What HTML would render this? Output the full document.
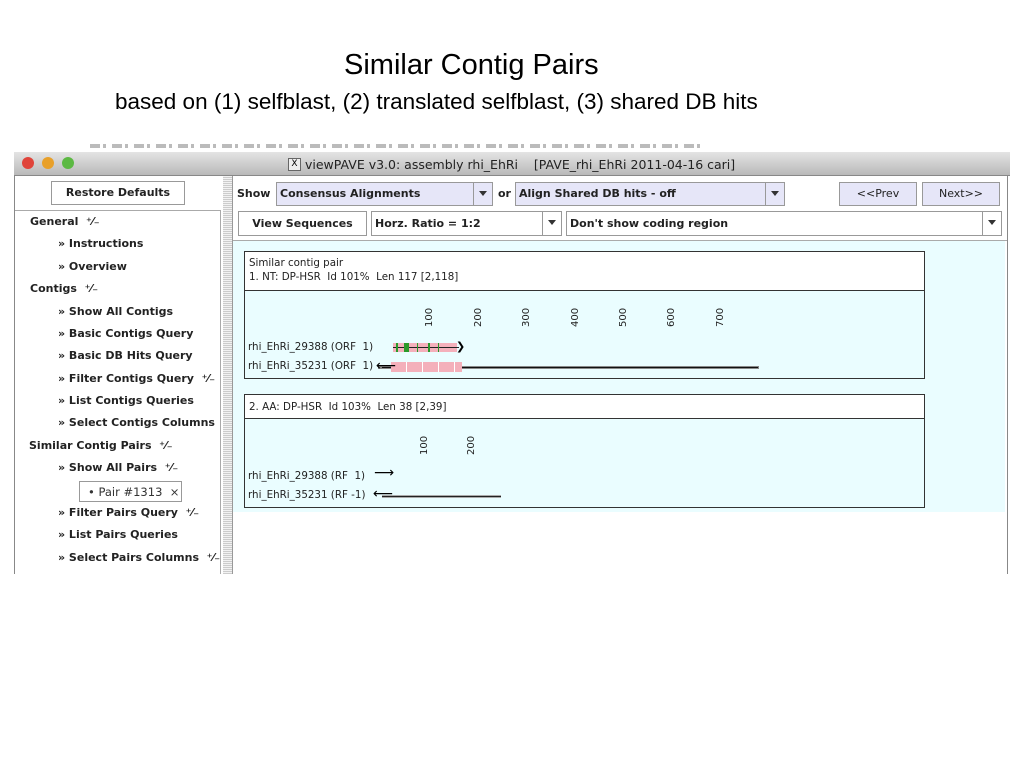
<!DOCTYPE html>
<html><head><style>
body{margin:0;width:1024px;height:768px;background:#fff;position:relative;overflow:hidden;font-family:"DejaVu Sans","Liberation Sans",sans-serif;}
.a{position:absolute;white-space:nowrap}
.h1{font-family:"Liberation Sans",sans-serif;font-size:29px;color:#000}
.h2{font-family:"Liberation Sans",sans-serif;font-size:22.5px;color:#000}
.nav{font-size:11px;font-weight:bold;color:#222}
.btn{position:absolute;border:1px solid #999;background:#fff;font-size:11px;font-weight:bold;color:#222;text-align:center;box-sizing:border-box}
.cmb{position:absolute;border:1px solid #999;box-sizing:border-box;font-size:11px;font-weight:bold;color:#222;padding-left:3px}
.cmb .ar{position:absolute;right:0;top:0;bottom:0;width:18px;border-left:1px solid #999;}
.cmb .ar:after{content:"";position:absolute;left:5px;top:8px;border-left:4px solid transparent;border-right:4px solid transparent;border-top:5px solid #333}
.sm{font-size:10.3px;color:#222}
.rot{position:absolute;font-size:10px;color:#222;transform:rotate(-90deg);transform-origin:left top}
</style></head><body>
<div class="a h1" style="left:344px;top:49px">Similar Contig Pairs</div>
<div class="a h2" style="left:115px;top:89px">based on (1) selfblast, (2) translated selfblast, (3) shared DB hits</div>
<div class="a" style="left:90px;top:144px;width:610px;height:4px;background:repeating-linear-gradient(90deg,#777 0 10px,transparent 10px 13px,#777 13px 16px,transparent 16px 22px);opacity:.5"></div>
<!-- window -->
<div class="a" style="left:14px;top:152px;width:996px;height:23px;background:linear-gradient(#e4e4e4,#b9b9b9);border-bottom:1px solid #888"></div>
<div class="a" style="left:22px;top:157px;width:12px;height:12px;border-radius:50%;background:#e0443a"></div>
<div class="a" style="left:42px;top:157px;width:12px;height:12px;border-radius:50%;background:#e8a02a"></div>
<div class="a" style="left:62px;top:157px;width:12px;height:12px;border-radius:50%;background:#5cb943"></div>
<div class="a" style="left:288px;top:158px;width:11px;height:11px;border:1px solid #666;background:#eee;font-size:9px;line-height:11px;text-align:center">X</div>
<div class="a" style="left:305px;top:157px;font-size:12.5px;color:#222">viewPAVE v3.0: assembly rhi_EhRi &nbsp;&nbsp;&nbsp;[PAVE_rhi_EhRi 2011-04-16 cari]</div>
<div class="a" style="left:14px;top:176px;width:1px;height:398px;background:#888"></div>
<div class="a" style="left:1007px;top:176px;width:1px;height:398px;background:#888"></div>
<!-- left panel -->
<div class="btn" style="left:51px;top:181px;width:134px;height:24px;line-height:22px">Restore Defaults</div>
<div class="a" style="left:15px;top:210px;width:205px;height:1px;background:#aaa"></div>
<div class="a" style="left:220px;top:210px;width:1px;height:364px;background:#aaa"></div>
<div class="a" style="left:223px;top:176px;width:9px;height:398px;background:repeating-linear-gradient(0deg,#ccc 0 1px,#f2f2f2 1px 2px)"></div>
<div class="a" style="left:232px;top:176px;width:1px;height:398px;background:#999"></div>
<div class="a nav" style="left:30px;top:215px">General &nbsp;⁺⁄₋</div>
<div class="a nav" style="left:58px;top:237px">» Instructions</div>
<div class="a nav" style="left:58px;top:260px">» Overview</div>
<div class="a nav" style="left:30px;top:282px">Contigs &nbsp;⁺⁄₋</div>
<div class="a nav" style="left:58px;top:305px">» Show All Contigs</div>
<div class="a nav" style="left:58px;top:327px">» Basic Contigs Query</div>
<div class="a nav" style="left:58px;top:349px">» Basic DB Hits Query</div>
<div class="a nav" style="left:58px;top:372px">» Filter Contigs Query &nbsp;⁺⁄₋</div>
<div class="a nav" style="left:58px;top:394px">» List Contigs Queries</div>
<div class="a nav" style="left:58px;top:416px">» Select Contigs Columns</div>
<div class="a nav" style="left:29px;top:439px">Similar Contig Pairs &nbsp;⁺⁄₋</div>
<div class="a nav" style="left:58px;top:461px">» Show All Pairs &nbsp;⁺⁄₋</div>
<div class="a" style="left:79px;top:481px;width:103px;height:21px;border:1px solid #999;font-size:11.5px;color:#333;line-height:20px;box-sizing:border-box;padding-left:8px">• Pair #1313 &nbsp;×</div>
<div class="a nav" style="left:58px;top:506px">» Filter Pairs Query &nbsp;⁺⁄₋</div>
<div class="a nav" style="left:58px;top:528px">» List Pairs Queries</div>
<div class="a nav" style="left:58px;top:551px">» Select Pairs Columns &nbsp;⁺⁄₋</div>
<!-- right toolbar -->
<div class="a nav" style="left:237px;top:187px">Show</div>
<div class="cmb" style="left:276px;top:182px;width:217px;height:24px;line-height:22px;background:#e6e6f8">Consensus Alignments<span class="ar"></span></div>
<div class="a nav" style="left:498px;top:187px">or</div>
<div class="cmb" style="left:515px;top:182px;width:270px;height:24px;line-height:22px;background:#e6e6f8">Align Shared DB hits - off<span class="ar"></span></div>
<div class="btn" style="left:839px;top:182px;width:78px;height:24px;line-height:22px;background:#e6e6f8;font-weight:normal">&lt;&lt;Prev</div>
<div class="btn" style="left:922px;top:182px;width:78px;height:24px;line-height:22px;background:#e6e6f8;font-weight:normal">Next&gt;&gt;</div>
<div class="btn" style="left:238px;top:211px;width:129px;height:25px;line-height:23px">View Sequences</div>
<div class="cmb" style="left:371px;top:211px;width:191px;height:25px;line-height:23px;background:#fff">Horz. Ratio = 1:2<span class="ar"></span></div>
<div class="cmb" style="left:566px;top:211px;width:436px;height:25px;line-height:23px;background:#fff">Don't show coding region<span class="ar"></span></div>
<div class="a" style="left:233px;top:240px;width:774px;height:1px;background:#aaa"></div>
<div class="a" style="left:233px;top:241px;width:772px;height:271px;background:#eafdff"></div>
<!-- box1 -->
<div class="a" style="left:244px;top:251px;width:681px;height:128px;border:1px solid #333;box-sizing:border-box;background:#eafdff"></div>
<div class="a" style="left:245px;top:252px;width:679px;height:38px;background:#fff;border-bottom:1px solid #333"></div>
<div class="a sm" style="left:249px;top:257px">Similar contig pair</div>
<div class="a sm" style="left:249px;top:271px">1. NT: DP-HSR &nbsp;Id 101% &nbsp;Len 117 [2,118]</div>
<div class="rot" style="left:424px;top:327px">100</div>
<div class="rot" style="left:473px;top:327px">200</div>
<div class="rot" style="left:521px;top:327px">300</div>
<div class="rot" style="left:570px;top:327px">400</div>
<div class="rot" style="left:618px;top:327px">500</div>
<div class="rot" style="left:666px;top:327px">600</div>
<div class="rot" style="left:715px;top:327px">700</div>
<div class="a sm" style="left:248px;top:341px">rhi_EhRi_29388 (ORF &nbsp;1)</div>
<div class="a" style="left:393px;top:343px;width:64px;height:9px;background:#f4b0bb"></div>
<div class="a" style="left:393px;top:347px;width:66px;height:1px;background:#222"></div>
<div class="a" style="left:396px;top:343px;width:2px;height:9px;background:#2a9a2a"></div>
<div class="a" style="left:404px;top:343px;width:5px;height:9px;background:#2a9a2a"></div>
<div class="a" style="left:417px;top:343px;width:1px;height:9px;background:#2a9a2a"></div>
<div class="a" style="left:428px;top:343px;width:2px;height:9px;background:#2a9a2a"></div>
<div class="a" style="left:438px;top:343px;width:1px;height:9px;background:#2a9a2a"></div>
<div class="a" style="left:456px;top:340px;font-size:11px">❯</div>
<div class="a sm" style="left:248px;top:360px">rhi_EhRi_35231 (ORF &nbsp;1)</div>
<div class="a" style="left:378px;top:366px;width:381px;height:3px;background:#888"></div>
<div class="a" style="left:382px;top:367px;width:376px;height:1px;background:#111"></div>
<div class="a" style="left:391px;top:362px;width:71px;height:10px;background:repeating-linear-gradient(90deg,#f4b0bb 0 15px,#fff 15px 16px)"></div>
<div class="a" style="left:376px;top:358px;font-size:14px">⟵</div>
<!-- box2 -->
<div class="a" style="left:244px;top:394px;width:681px;height:114px;border:1px solid #333;box-sizing:border-box;background:#eafdff"></div>
<div class="a" style="left:245px;top:395px;width:679px;height:23px;background:#fff;border-bottom:1px solid #333"></div>
<div class="a sm" style="left:249px;top:401px">2. AA: DP-HSR &nbsp;Id 103% &nbsp;Len 38 [2,39]</div>
<div class="rot" style="left:419px;top:455px">100</div>
<div class="rot" style="left:466px;top:455px">200</div>
<div class="a sm" style="left:248px;top:470px">rhi_EhRi_29388 (RF &nbsp;1)</div>
<div class="a" style="left:374px;top:465px;font-size:14px">⟶</div>
<div class="a sm" style="left:248px;top:489px">rhi_EhRi_35231 (RF -1)</div>
<div class="a" style="left:382px;top:495px;width:119px;height:3px;background:#aaa"></div>
<div class="a" style="left:382px;top:496px;width:119px;height:1px;background:#222"></div>
<div class="a" style="left:373px;top:486px;font-size:14px">⟵</div>
</body></html>
